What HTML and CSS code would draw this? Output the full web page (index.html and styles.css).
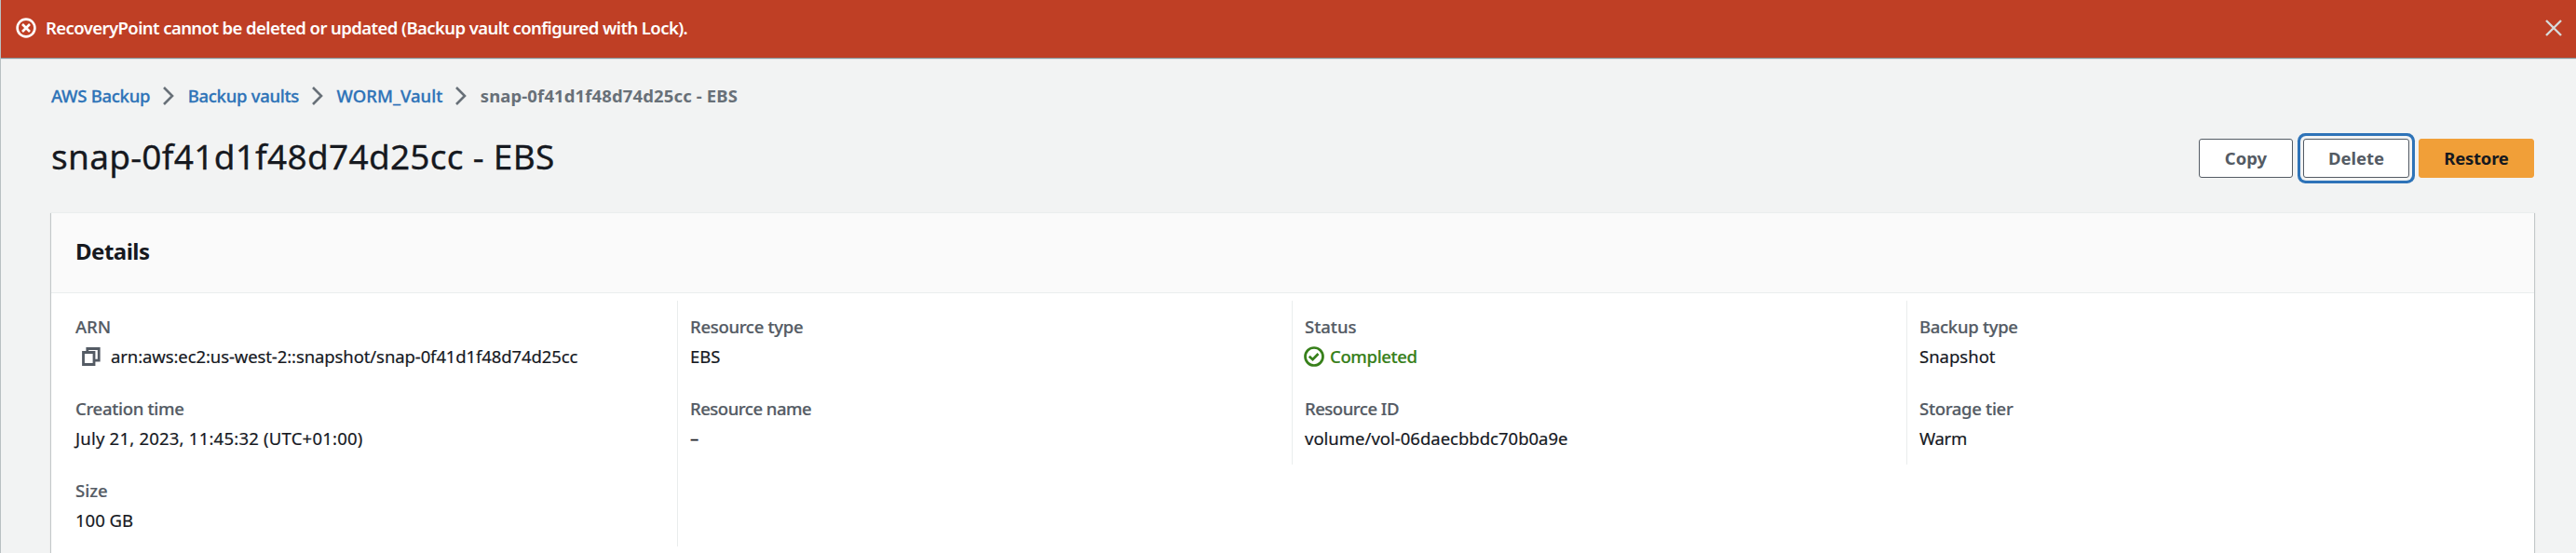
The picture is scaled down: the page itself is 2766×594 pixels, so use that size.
FILE: index.html
```html
<!DOCTYPE html>
<html lang="en">
<head>
<meta charset="utf-8">
<title>Recovery point details</title>
<link rel="stylesheet" href="styles.css">
</head>
<body>
<div class="page">
  <div class="flash" role="alert">
    <svg class="flash-icon" viewBox="0 0 22 22" fill="none" stroke="currentColor" stroke-width="2.6"><circle cx="11" cy="11" r="9.4"/><path d="M7 7l8 8M15 7l-8 8"/></svg>
    <span class="flash-text">RecoveryPoint cannot be deleted or updated (Backup vault configured with Lock).</span>
    <svg class="flash-close" viewBox="0 0 18 18" fill="none" stroke="currentColor" stroke-width="2.4"><path d="M1 1l16 16M17 1L1 17"/></svg>
  </div>
  <main class="content">
    <nav class="crumbs">
      <a class="crumb">AWS Backup</a>
      <svg class="chev" viewBox="0 0 12 20" fill="none" stroke="currentColor" stroke-width="2.6"><path d="M1 1l9 9L1 19"/></svg>
      <a class="crumb">Backup vaults</a>
      <svg class="chev" viewBox="0 0 12 20" fill="none" stroke="currentColor" stroke-width="2.6"><path d="M1 1l9 9L1 19"/></svg>
      <a class="crumb wide">WORM_Vault</a>
      <svg class="chev" viewBox="0 0 12 20" fill="none" stroke="currentColor" stroke-width="2.6"><path d="M1 1l9 9L1 19"/></svg>
      <span class="crumb current">snap-0f41d1f48d74d25cc - EBS</span>
    </nav>
    <div class="heading">
      <h1 class="title">snap-0f41d1f48d74d25cc - EBS</h1>
      <div class="actions">
        <button class="btn copy">Copy</button>
        <button class="btn delete">Delete</button>
        <button class="btn restore">Restore</button>
      </div>
    </div>
    <section class="card">
      <h2 class="card-head">Details</h2>
      <div class="cols">
        <dl class="col">
          <dt class="wide">ARN</dt>
          <dd class="arn"><svg class="copy-icon" viewBox="0 0 20 20" fill="none" stroke="currentColor" stroke-width="2.8"><path d="M1.5 5.5h11.5v13h-11.5z"/><path d="M5.8 5.5V1.5h12.4v12.7h-5"/></svg>arn:aws:ec2:us-west-2::snapshot/snap-0f41d1f48d74d25cc</dd>
          <dt>Creation time</dt>
          <dd class="date">July 21, 2023, 11:45:32 (UTC+01:00)</dd>
          <dt class="wide">Size</dt>
          <dd>100 GB</dd>
        </dl>
        <dl class="col">
          <dt>Resource type</dt>
          <dd>EBS</dd>
          <dt class="tight">Resource name</dt>
          <dd>–</dd>
        </dl>
        <dl class="col">
          <dt class="wide">Status</dt>
          <dd class="ok"><svg class="ok-icon" viewBox="0 0 22 22" fill="none" stroke="currentColor" stroke-width="2.7"><circle cx="11" cy="11" r="9.5"/><path d="M5.8 10.8l3.7 3.4 6-6.2"/></svg>Completed</dd>
          <dt class="tight">Resource ID</dt>
          <dd>volume/vol-06daecbbdc70b0a9e</dd>
        </dl>
        <dl class="col last">
          <dt>Backup type</dt>
          <dd>Snapshot</dd>
          <dt>Storage tier</dt>
          <dd class="tier">Warm</dd>
        </dl>
      </div>
    </section>
  </main>
</div>
</body>
</html>
```
FILE: styles.css
```css
* { box-sizing: border-box; }
body { margin: 0; background: #f2f3f3; color: #16191f; font: 18.5px/24px "Noto Sans", sans-serif; }
.page { height: 594px; overflow: hidden; border-left: 1px solid #b9c0c2; }
.flash { display: flex; align-items: center; height: 62px; padding: 0 15px 2px 16px; background: #bf3f25; color: #fff; box-shadow: 0 1px 1px #879196; }
.flash-icon { width: 22px; height: 22px; margin-right: 10px; }
.flash-text { flex: 1; font-weight: 600; letter-spacing: -0.58px; }
.flash-close { width: 18px; height: 18px; color: #d5dbdb; }
.content { padding: 0 45px 0 54px; }
.crumbs { display: flex; align-items: center; padding-top: 29px; height: 53px; }
.crumb { font-weight: 500; color: #2e73b8; white-space: nowrap; letter-spacing: -0.28px; -webkit-text-stroke: 0.3px; }
.crumb.wide { letter-spacing: 0; }
.crumb.current { font-weight: 700; color: #687078; letter-spacing: 0.13px; -webkit-text-stroke: 0; }
.chev { width: 12px; height: 20px; margin: 0 14.5px 0 14px; color: #687078; }
.heading { display: flex; justify-content: space-between; align-items: flex-start; height: 113px; padding-top: 32px; }
.title { margin: 0; font-size: 37px; line-height: 42px; font-weight: 400; letter-spacing: 0.27px; -webkit-text-stroke: 0.3px; }
.actions { display: flex; margin-top: 2px; }
.btn { height: 42px; border: 1px solid #545b64; border-radius: 3px; background: #fff; color: #545b64; font: 700 18.5px/24px "Noto Sans", sans-serif; padding: 0; }
.copy { width: 101px; margin-right: 11px; }
.delete { width: 114px; margin-right: 10px; box-shadow: 0 0 0 3px #f2f3f3, 0 0 0 6px #2e73b8; }
.restore { width: 124px; border-color: #f19f38; background: #f19f38; color: #16191f; letter-spacing: -0.25px; }
.card { height: 400px; background: #fff; border-top: 1px solid #eaeded; box-shadow: 0 1px 1px rgba(0, 28, 36, .3), 1px 1px 1px rgba(0, 28, 36, .15), -1px 1px 1px rgba(0, 28, 36, .15); }
.card-head { margin: 0; height: 86px; padding: 29px 26px 0; border-bottom: 1px solid #eaeded; background: #fafafa; font-size: 24px; line-height: 24px; font-weight: 700; letter-spacing: -0.5px; }
.cols { display: grid; grid-template-columns: repeat(4, 660px); align-items: start; padding: 8px 13px; }
.col { margin: 0; padding-left: 13px; border-right: 1px solid #eaeded; -webkit-text-stroke: 0.2px; }
.last { border-right: 0; }
dt { height: 44px; padding-top: 16px; color: #545b64; font-weight: 500; letter-spacing: -0.3px; }
dt.wide { letter-spacing: 0; }
dt.tight { letter-spacing: -0.48px; }
dd { display: flex; align-items: center; height: 44px; margin: 0; padding-bottom: 12px; }
.arn { letter-spacing: -0.1px; }
.date { letter-spacing: 0.22px; }
.tier { letter-spacing: -0.3px; }
.copy-icon { width: 20px; height: 20px; margin: 0 11px 0 7px; color: #545b64; }
.ok { color: #37801a; font-weight: 500; letter-spacing: -0.35px; }
.ok-icon { width: 22px; height: 22px; margin: 0 6px 0 -1px; }
```
